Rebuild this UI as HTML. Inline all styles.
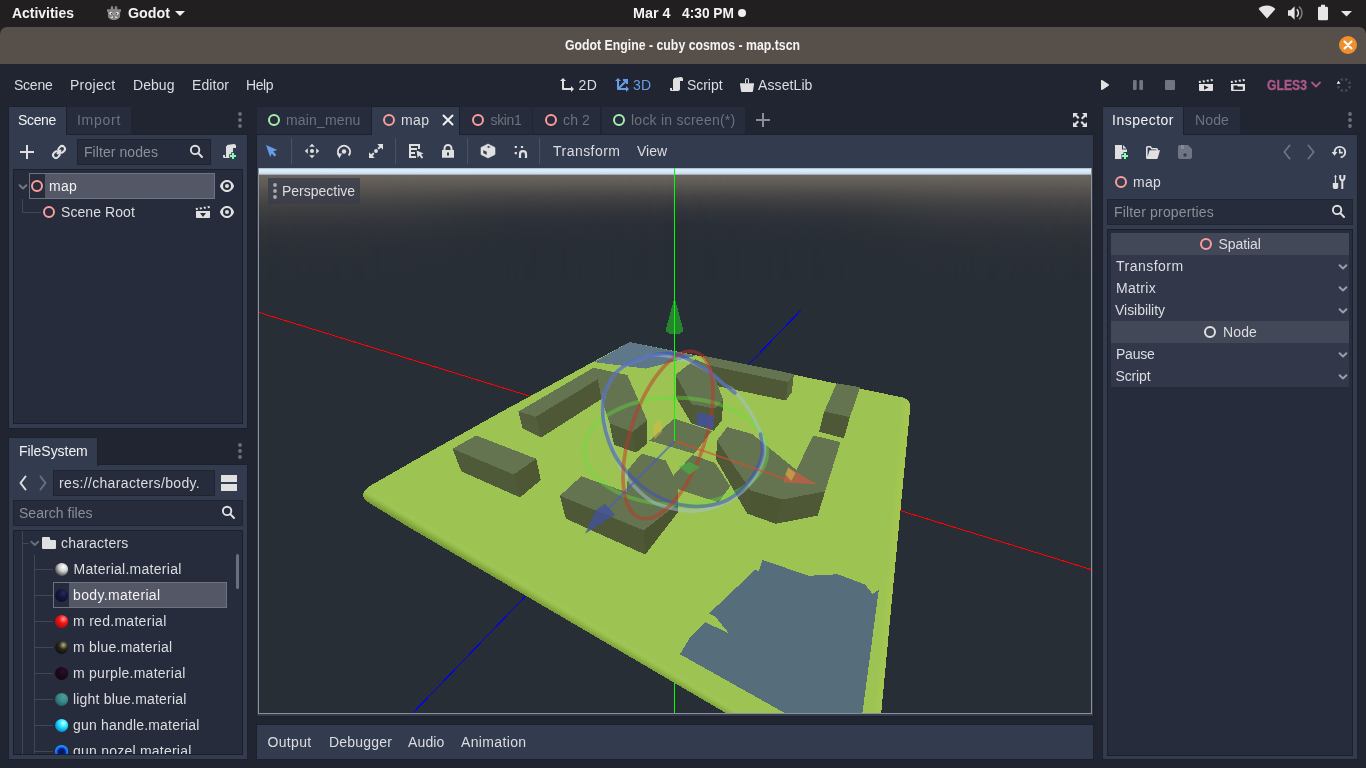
<!DOCTYPE html>
<html lang="en">
<head>
<meta charset="utf-8">
<title>Godot Engine - cuby cosmos - map.tscn</title>
<style>
html,body{margin:0;padding:0;}
body{width:1366px;height:768px;overflow:hidden;background:#202531;position:relative;
  font-family:"Liberation Sans","DejaVu Sans",sans-serif;font-size:14px;color:#dcdde1;}
.a{position:absolute;}
.t{position:absolute;white-space:nowrap;line-height:20px;height:20px;z-index:2;}
.b{font-weight:bold;transform-origin:0 50%;color:#f4f4f4;}
.dim{color:#6d727e;}
.ph{color:#8b8f99;}
.hl{color:#f2f2f2;}
svg{position:absolute;overflow:visible;z-index:2;}
.tabsel{background:#333b4f;z-index:1;box-shadow:-1px 0 #1c212c,1px 0 #1c212c,0 -1px #1c212c;}
.tabun{background:#262c3b;}
.panel{background:#333b4f;box-shadow:0 0 0 1px #1c212c;}
.tree{background:#262c3b;border:1px solid #1c202b;box-sizing:border-box;}
.field{background:#262c3b;border:1px solid #20242f;box-sizing:border-box;}
.sec{background:#424858;}
.row{background:#32384a;}
.sel{background:#545866;border:1px solid #6f7380;box-sizing:border-box;}
.ln{background:#414757;}
.sep{background:#4a5163;width:1px;}
</style>
</head>
<body>
<div id="root" style="position:absolute;left:0;top:0;width:1366px;height:768px;will-change:transform;">
<div class="a " style="left:0px;top:0px;width:1366px;height:27px;background:#211f1f;"></div>
<div class="t b" style="left:12px;top:3px;font-size:15px;transform:scaleX(0.929);">Activities</div>
<div class="t b" style="left:128px;top:3px;font-size:15px;transform:scaleX(0.951);">Godot</div>
<div class="t b" style="left:632.5px;top:3px;font-size:15px;transform:scaleX(0.957);">Mar 4</div>
<div class="t b" style="left:681.5px;top:3px;font-size:15px;transform:scaleX(0.917);">4:30 PM</div>
<div class="a " style="left:738px;top:9px;width:8px;height:8px;background:#f0f0f0;border-radius:50%;"></div>
<div class="a " style="left:0px;top:27px;width:1366px;height:10px;background:#211f1f;"></div>
<div class="a " style="left:0px;top:27px;width:1366px;height:37px;background:#574f4a;border-radius:7px 7px 0 0;"></div>
<div class="t b" style="left:565px;top:35px;font-size:14.5px;transform:scaleX(0.848);">Godot Engine - cuby cosmos - map.tscn</div>
<div class="a " style="left:1339px;top:36px;width:18px;height:18px;background:#ef8f2d;border-radius:50%;"></div>
<div class="t" style="left:14px;top:75px;letter-spacing:-0.24px;">Scene</div>
<div class="t" style="left:70px;top:75px;letter-spacing:0.27px;">Project</div>
<div class="t" style="left:133px;top:75px;letter-spacing:0.05px;">Debug</div>
<div class="t" style="left:192px;top:75px;letter-spacing:0.07px;">Editor</div>
<div class="t" style="left:246px;top:75px;letter-spacing:-0.45px;">Help</div>
<div class="t" style="left:578.5px;top:75px;letter-spacing:0.55px;">2D</div>
<div class="t" style="left:633px;top:75px;letter-spacing:0.30px;color:#699ce8;">3D</div>
<div class="t" style="left:687px;top:75px;letter-spacing:-0.05px;">Script</div>
<div class="t" style="left:758px;top:75px;letter-spacing:0.10px;">AssetLib</div>
<div class="t b" style="left:1267px;top:75px;font-size:14px;transform:scaleX(0.871);color:#ad5689;-webkit-text-stroke:.35px #ad5689;">GLES3</div>
<div class="a tabsel" style="left:9px;top:107px;width:57px;height:28px;"></div>
<div class="a tabun" style="left:67px;top:107px;width:64px;height:27px;"></div>
<div class="a panel" style="left:9px;top:135px;width:238px;height:293px;"></div>
<div class="t hl" style="left:18px;top:110px;letter-spacing:-0.34px;">Scene</div>
<div class="t dim" style="left:77px;top:110px;letter-spacing:0.72px;">Import</div>
<div class="a field" style="left:77px;top:139px;width:134px;height:26px;"></div>
<div class="t ph" style="left:84px;top:142px;letter-spacing:0.07px;">Filter nodes</div>
<div class="a tree" style="left:13px;top:169px;width:230px;height:255px;"></div>
<div class="a sel" style="left:29px;top:173px;width:186px;height:26px;"></div>
<div class="a " style="left:30px;top:174px;width:15px;height:24px;background:#262c3b;"></div>
<div class="t hl" style="left:49px;top:176px;letter-spacing:0.26px;">map</div>
<div class="t" style="left:61px;top:202px;letter-spacing:0.08px;">Scene Root</div>
<div class="a ln" style="left:22px;top:199px;width:1px;height:14px;"></div>
<div class="a ln" style="left:22px;top:212px;width:19px;height:1px;"></div>
<div class="a tabsel" style="left:9px;top:438px;width:88px;height:28px;"></div>
<div class="a panel" style="left:9px;top:465px;width:238px;height:294px;"></div>
<div class="t hl" style="left:19px;top:441px;letter-spacing:-0.05px;">FileSystem</div>
<div class="a field" style="left:53px;top:470px;width:162px;height:26px;"></div>
<div class="t" style="left:59px;top:473px;letter-spacing:0.34px;">res://characters/body.</div>
<div class="a field" style="left:13px;top:500px;width:230px;height:26px;"></div>
<div class="t ph" style="left:19px;top:503px;letter-spacing:0.03px;">Search files</div>
<div class="a tree" style="left:13px;top:530px;width:230px;height:225px;overflow:hidden;">
<div class="a ln" style="left:8px;top:0px;width:1px;height:230px;"></div>
<div class="a ln" style="left:9px;top:12px;width:6px;height:1px;"></div>
<div class="a ln" style="left:20px;top:24px;width:1px;height:210px;"></div>
<div class="a ln" style="left:21px;top:38px;width:18px;height:1px;"></div>
<div class="a ln" style="left:21px;top:64px;width:18px;height:1px;"></div>
<div class="a ln" style="left:21px;top:90px;width:18px;height:1px;"></div>
<div class="a ln" style="left:21px;top:116px;width:18px;height:1px;"></div>
<div class="a ln" style="left:21px;top:142px;width:18px;height:1px;"></div>
<div class="a ln" style="left:21px;top:168px;width:18px;height:1px;"></div>
<div class="a ln" style="left:21px;top:194px;width:18px;height:1px;"></div>
<div class="a ln" style="left:21px;top:220px;width:18px;height:1px;"></div>
<div class="a sel" style="left:39px;top:51px;width:174px;height:26px;"></div>
<div class="a " style="left:40px;top:52px;width:15px;height:24px;background:#262c3b;"></div>
<div class="t" style="left:47px;top:2px;letter-spacing:0.21px;">characters</div>
<div class="t" style="left:59.5px;top:28px;letter-spacing:0.27px;">Material.material</div>
<div class="t hl" style="left:59px;top:54px;letter-spacing:0.34px;">body.material</div>
<div class="t" style="left:59px;top:80px;letter-spacing:0.29px;">m red.material</div>
<div class="t" style="left:59px;top:106px;letter-spacing:0.25px;">m blue.material</div>
<div class="t" style="left:59px;top:132px;letter-spacing:0.26px;">m purple.material</div>
<div class="t" style="left:59px;top:158px;letter-spacing:0.20px;">light blue.material</div>
<div class="t" style="left:59px;top:184px;letter-spacing:0.19px;">gun handle.material</div>
<div class="t" style="left:59px;top:210px;letter-spacing:0.23px;">gun nozel.material</div>
<div class="a " style="left:222px;top:23px;width:3px;height:35px;background:#6b6f7b;border-radius:2px;"></div>
<svg style="left:0;top:0;" width="228" height="223" viewBox="14 531 228 223"><defs><radialGradient id="sg0" cx=".64" cy=".32" r=".75"><stop offset="0" stop-color="#ffffff"/><stop offset=".45" stop-color="#cfcfcf"/><stop offset="1" stop-color="#3a3a3a"/></radialGradient><radialGradient id="sg1" cx=".64" cy=".32" r=".75"><stop offset="0" stop-color="#2a2a58"/><stop offset=".45" stop-color="#16163e"/><stop offset="1" stop-color="#0d0d28"/></radialGradient><radialGradient id="sg2" cx=".64" cy=".32" r=".75"><stop offset="0" stop-color="#ff9a9a"/><stop offset=".45" stop-color="#f01414"/><stop offset="1" stop-color="#b00808"/></radialGradient><radialGradient id="sg3" cx=".64" cy=".32" r=".75"><stop offset="0" stop-color="#b8b080"/><stop offset=".45" stop-color="#2a281c"/><stop offset="1" stop-color="#0c0c08"/></radialGradient><radialGradient id="sg4" cx=".64" cy=".32" r=".75"><stop offset="0" stop-color="#2a1028"/><stop offset=".45" stop-color="#1c0a1c"/><stop offset="1" stop-color="#120612"/></radialGradient><radialGradient id="sg5" cx=".64" cy=".32" r=".75"><stop offset="0" stop-color="#4a9c9c"/><stop offset=".45" stop-color="#3b8c8c"/><stop offset="1" stop-color="#245e62"/></radialGradient><radialGradient id="sg6" cx=".64" cy=".32" r=".75"><stop offset="0" stop-color="#c8ffff"/><stop offset=".45" stop-color="#1ee6ff"/><stop offset="1" stop-color="#0a78c8"/></radialGradient><radialGradient id="sg7" cx=".5" cy=".55" r=".5"><stop offset="0" stop-color="#081458"/><stop offset=".55" stop-color="#0a1c78"/><stop offset=".72" stop-color="#0a60ff"/><stop offset="1" stop-color="#18a0ff"/></radialGradient></defs><circle cx="61.600" cy="569.4" r="6.500" fill="url(#sg0)"/><circle cx="61.600" cy="595.4" r="6.500" fill="url(#sg1)"/><circle cx="61.600" cy="621.4" r="6.500" fill="url(#sg2)"/><circle cx="61.600" cy="647.4" r="6.500" fill="url(#sg3)"/><circle cx="61.600" cy="673.4" r="6.500" fill="url(#sg4)"/><circle cx="61.600" cy="699.4" r="6.500" fill="url(#sg5)"/><circle cx="61.600" cy="725.4" r="6.500" fill="url(#sg6)"/><circle cx="61.600" cy="751.400" r="6.500" fill="url(#sg7)"/><path transform="translate(41 535)" d="m2 2a1 1 0 0 0-1 1v2 6 2a1 1 0 0 0 1 1h12a1 1 0 0 0 1-1v-7a1 1 0 0 0-1-1h-4a1 1 0 0 1-1-1v-1a1 1 0 0 0-1-1z" fill="#e0e0e0"/><path d="M31.400 541.700 34.800 545 38.200 541.700" stroke="#676c7b" stroke-width="2" fill="none" stroke-linecap="round" stroke-linejoin="round"/></svg>
</div>
<div class="a tabun" style="left:257px;top:107px;width:114px;height:27px;"></div>
<div class="a tabsel" style="left:372px;top:107px;width:87px;height:28px;"></div>
<div class="a tabun" style="left:460px;top:107px;width:72px;height:27px;"></div>
<div class="a tabun" style="left:533px;top:107px;width:67px;height:27px;"></div>
<div class="a tabun" style="left:602px;top:107px;width:143px;height:27px;"></div>
<div class="t dim" style="left:286px;top:110px;letter-spacing:0.15px;">main_menu</div>
<div class="t" style="left:401px;top:110px;letter-spacing:0.42px;">map</div>
<div class="t dim" style="left:490.5px;top:110px;letter-spacing:-0.34px;">skin1</div>
<div class="t dim" style="left:563px;top:110px;letter-spacing:0.13px;">ch 2</div>
<div class="t dim" style="left:631px;top:110px;letter-spacing:0.24px;">lock in screen(*)</div>
<div class="a panel" style="left:257px;top:135px;width:836px;height:581px;"></div>
<div class="a sep" style="left:291px;top:138px;width:1px;height:26px;"></div>
<div class="a sep" style="left:395px;top:138px;width:1px;height:26px;"></div>
<div class="a sep" style="left:467px;top:138px;width:1px;height:26px;"></div>
<div class="a sep" style="left:539px;top:138px;width:1px;height:26px;"></div>
<div class="t" style="left:553px;top:141px;letter-spacing:0.47px;">Transform</div>
<div class="t" style="left:637px;top:141px;letter-spacing:-0.02px;">View</div>
<div id="viewport" class="a" style="left:258px;top:168px;width:834px;height:546px;background:#282e36;overflow:hidden;z-index:0;">
<svg style="left:-258px;top:-168px;" width="1366" height="768" viewBox="0 0 1366 768">
<defs>
<linearGradient id="skyC" x1="0" y1="0" x2="0" y2="1"><stop offset="0.0000" stop-color="#8c93a3"/><stop offset="0.0089" stop-color="#dcedfc"/><stop offset="0.0312" stop-color="#d8eafa"/><stop offset="0.0491" stop-color="#c9dcec"/><stop offset="0.0580" stop-color="#a4adb6"/><stop offset="0.0670" stop-color="#6a645e"/><stop offset="0.0893" stop-color="#68625c"/><stop offset="0.1161" stop-color="#635e59"/><stop offset="0.1429" stop-color="#5d5955"/><stop offset="0.1786" stop-color="#555250"/><stop offset="0.2143" stop-color="#4e4c4b"/><stop offset="0.2500" stop-color="#464546"/><stop offset="0.2857" stop-color="#404042"/><stop offset="0.3214" stop-color="#3a3c3f"/><stop offset="0.3571" stop-color="#35383c"/><stop offset="0.4018" stop-color="#31343a"/><stop offset="0.4464" stop-color="#2e3239"/><stop offset="0.4911" stop-color="#2b3038"/><stop offset="0.5357" stop-color="#2a2f37"/><stop offset="0.5893" stop-color="#292f36"/><stop offset="0.6429" stop-color="#292e36"/><stop offset="0.7143" stop-color="#282e36"/><stop offset="0.8036" stop-color="#282e36"/><stop offset="0.8929" stop-color="#282e36"/><stop offset="1.0000" stop-color="#282e36"/></linearGradient><linearGradient id="skyE" x1="0" y1="0" x2="0" y2="1"><stop offset="0.0000" stop-color="#8c93a3"/><stop offset="0.0089" stop-color="#dcedfc"/><stop offset="0.0312" stop-color="#d8eafa"/><stop offset="0.0491" stop-color="#c9dcec"/><stop offset="0.0580" stop-color="#a4adb6"/><stop offset="0.0670" stop-color="#6a645e"/><stop offset="0.0893" stop-color="#67625c"/><stop offset="0.1161" stop-color="#635e59"/><stop offset="0.1429" stop-color="#5f5b56"/><stop offset="0.1786" stop-color="#595552"/><stop offset="0.2143" stop-color="#54514f"/><stop offset="0.2500" stop-color="#4e4c4b"/><stop offset="0.2857" stop-color="#494848"/><stop offset="0.3214" stop-color="#444445"/><stop offset="0.3571" stop-color="#404043"/><stop offset="0.4018" stop-color="#3b3d40"/><stop offset="0.4464" stop-color="#37393e"/><stop offset="0.4911" stop-color="#34373c"/><stop offset="0.5357" stop-color="#31353a"/><stop offset="0.5893" stop-color="#2f3339"/><stop offset="0.6429" stop-color="#2d3138"/><stop offset="0.7143" stop-color="#2b3037"/><stop offset="0.8036" stop-color="#2a2f37"/><stop offset="0.8929" stop-color="#292f36"/><stop offset="1.0000" stop-color="#282e36"/></linearGradient><linearGradient id="skyW" x1="0" y1="0" x2="1" y2="0"><stop offset="0.0000" stop-color="#fff" stop-opacity="1.000"/><stop offset="0.0444" stop-color="#fff" stop-opacity="0.969"/><stop offset="0.0923" stop-color="#fff" stop-opacity="0.901"/><stop offset="0.1463" stop-color="#fff" stop-opacity="0.857"/><stop offset="0.1882" stop-color="#fff" stop-opacity="0.746"/><stop offset="0.2302" stop-color="#fff" stop-opacity="0.500"/><stop offset="0.2722" stop-color="#fff" stop-opacity="0.254"/><stop offset="0.3141" stop-color="#fff" stop-opacity="0.143"/><stop offset="0.3681" stop-color="#fff" stop-opacity="0.114"/><stop offset="0.4281" stop-color="#fff" stop-opacity="0.048"/><stop offset="0.5000" stop-color="#fff" stop-opacity="0.000"/><stop offset="0.5719" stop-color="#fff" stop-opacity="0.048"/><stop offset="0.6319" stop-color="#fff" stop-opacity="0.114"/><stop offset="0.6859" stop-color="#fff" stop-opacity="0.143"/><stop offset="0.7278" stop-color="#fff" stop-opacity="0.254"/><stop offset="0.7698" stop-color="#fff" stop-opacity="0.500"/><stop offset="0.8118" stop-color="#fff" stop-opacity="0.746"/><stop offset="0.8537" stop-color="#fff" stop-opacity="0.857"/><stop offset="0.9077" stop-color="#fff" stop-opacity="0.901"/><stop offset="0.9556" stop-color="#fff" stop-opacity="0.969"/><stop offset="1.0000" stop-color="#fff" stop-opacity="1.000"/></linearGradient><mask id="skyM" maskUnits="userSpaceOnUse" x="258" y="168" width="834" height="112"><rect x="258" y="168" width="834" height="112" fill="url(#skyW)"/></mask>
<linearGradient id="edgeL" gradientUnits="userSpaceOnUse" x1="505.600" y1="571" x2="500" y2="580.400"><stop offset="0" stop-color="#9dc353"/><stop offset=".2" stop-color="#a0c655"/><stop offset=".45" stop-color="#98be4e"/><stop offset=".7" stop-color="#8aae43"/><stop offset="1" stop-color="#779a36"/></linearGradient>
<linearGradient id="edgeR" gradientUnits="userSpaceOnUse" x1="887" y1="560" x2="896" y2="560.800"><stop offset="0" stop-color="#9dc353"/><stop offset=".5" stop-color="#a2c651"/><stop offset="1" stop-color="#a6c74d"/></linearGradient>
</defs>
<rect x="258" y="168" width="834" height="112" fill="url(#skyC)"/><rect x="258" y="168" width="834" height="112" fill="url(#skyE)" mask="url(#skyM)"/>
<!-- world axes (behind plane) -->
<path d="M258 312.200 1092 569.800" stroke="#f00" stroke-width="1" shape-rendering="crispEdges"/>
<path d="M800.900 310.300 411.900 714" stroke="#0000f0" stroke-width="1" shape-rendering="crispEdges"/>
<path d="M674.500 168V714" stroke="#0f0" stroke-width="1" shape-rendering="crispEdges"/>
<!-- plane -->
<g shape-rendering="crispEdges">
<path d="M627 343.400Q629.500 341.600 633 342.700L794 374.700 903 397.600Q911 400 910.200 408L881.100 714H727.500L580 627.500 410.200 528 368.600 502.500Q361 497.500 364 491.500 366 488 371.300 485.200L415.100 460 500 412.600Z" fill="#9dc353"/>
<path d="M727.500 714 580 627.500 410.200 528 368.600 502.500Q361 497.500 364 491.500L376 495 420 520 590 620 750 714Z" fill="url(#edgeL)"/>
<path d="M898 400 903 397.600Q911 400 910.200 408L881.100 714H869Z" fill="url(#edgeR)"/>
</g>
<!-- blue-grey patches -->
<path shape-rendering="crispEdges" d="M629.500 342 594.200 362.200 645.700 368.600 696 355.700Z" fill="#5e7889"/>
<path shape-rendering="crispEdges" d="M762.500 560 808.750 575.750 837.500 574.250 865 584.500 872.500 593.750 878.750 590 862.300 714H786.500L680 654.250 690 637.500 705 622 728.750 633.250 715 616.250 708.750 613.750 755 570 758.750 571.250Z" fill="#566e7c"/>
<g shape-rendering="crispEdges">
<!-- building G -->
<path d="M452.500 448.750 476.250 435.500 536.250 458.750 513.750 474.500Z" fill="#647450"/>
<path d="M452.500 448.750 513.750 474.500 520 497.500 461.400 471.400Z" fill="#4f5a38"/>
<path d="M513.750 474.500 536.250 458.750 540.750 480 520 497.500Z" fill="#4d5734"/>
<!-- building A (L) -->
<path d="M518.400 411.500 593.500 367.700 627.300 375 647.200 420.400 632 432 609.600 423.300 601.500 399 597.900 379.200 536 416.700Z" fill="#647450"/>
<path d="M518.400 411.500 536 416.700 541.250 437.500 522.500 428Z" fill="#535e3e"/>
<path d="M536 416.700 597.900 379.200 601.500 399 541.250 437.500Z" fill="#4e5836"/>
<path d="M609.600 423.300 632 432 636 452.600 614 444.800Z" fill="#4f5a38"/>
<path d="M632 432 647.200 420.400 647.400 443.500 636 452.600Z" fill="#4c5633"/>
<!-- building B (bar top right) -->
<path d="M702.700 355.600 793.900 374 788 382 710 365.600Z" fill="#647450"/>
<path d="M710 365.600 788 382 785.800 400.500 712.200 385Z" fill="#4e5836"/>
<path d="M793.900 374 788 382 785.800 400.500 791.700 392.400Z" fill="#59643f"/>
<!-- building C -->
<path d="M675.500 374.700 695.300 359.300 710 365.600 723.300 399.800 715.200 408.600 691.600 404.200Z" fill="#647450"/>
<path d="M675.500 374.700 691.600 404.200 691.600 423.300 675.500 396.800Z" fill="#4e5836"/>
<path d="M691.600 404.200 715.200 408.600 713.700 430.700 691.600 423.300Z" fill="#4f5a38"/>
<path d="M715.200 408.600 723.300 399.800 721.800 420.400 713.700 430.700Z" fill="#4c5633"/>
<!-- building D -->
<path d="M836.700 383.300 860.200 387.200 849.900 417.100 824.200 411.500Z" fill="#647450"/>
<path d="M824.200 411.500 849.900 417.100 844 438.300 819 431.700Z" fill="#4e5836"/>
<!-- building I (centre pad) -->
<path d="M649.300 440.600 674 418.700 712 431 694.200 453.800Z" fill="#647450"/>
<!-- building E (V) -->
<path d="M716.900 440.600 727.200 427.100 752.200 434 796.400 470 813.300 435.500 840.500 442.100 825.100 491.400 782.400 499.500 750.800 490.600Z" fill="#647450"/>
<path d="M716.900 440.600 750.800 490.600 747.100 513.500 716.200 459.700Z" fill="#4e5836"/>
<path d="M750.800 490.600 782.400 499.500 775.800 523.800 747.100 513.500Z" fill="#4c5633"/>
<path d="M782.400 499.500 825.100 491.400 817.700 515.700 775.800 523.800Z" fill="#4e5836"/>
<!-- building H+J+K -->
<path d="M559.900 495.800 581.200 476.300 626.800 492.100 628.300 469.300 641.500 453.500 665.800 460.500 673.200 475.900 692.300 455 714.800 462.700 730.200 486.200 718.500 502.400 677.600 489.200 677.600 504 643.800 530.400Z" fill="#647450"/>
<path d="M559.900 495.800 643.800 530.400 645.200 554.600 565.800 518.600Z" fill="#4e5836"/>
<path d="M643.800 530.400 677.600 504 677.600 512.700 645.200 554.600Z" fill="#4a5431"/>
</g>
<!-- gizmo -->
<g fill="none" stroke-width="3.600">
<ellipse cx="675.600" cy="451.200" rx="91.600" ry="53.500" transform="rotate(.6 675.600 451.200)" stroke="rgba(100,225,60,.4)" stroke-width="4"/>
<path d="M602.9 411.6C602.0 405.7 602.7 405.6 603.2 402.0C603.7 398.4 603.2 395.4 605.8 390.1C608.4 384.8 611.7 375.7 618.6 370.1C625.5 364.5 639.6 358.9 647.3 356.5C655.0 354.1 660.2 355.1 665.0 355.5C669.8 355.9 671.8 357.6 676.0 358.6C680.2 359.6 684.7 359.4 690.0 361.5C695.3 363.6 702.0 366.9 708.0 371.0C714.0 375.1 721.8 382.6 726.0 385.8C730.2 389.0 729.6 386.5 733.2 390.1C736.8 393.7 743.2 400.9 747.5 407.3C751.8 413.8 756.1 421.7 759.0 428.8C761.9 435.9 764.9 442.8 764.7 450.0C764.5 457.2 761.8 465.0 758.0 472.0C754.2 479.0 748.3 486.5 742.0 492.0C735.7 497.5 727.5 501.8 720.0 505.0C712.5 508.2 704.5 510.3 697.0 511.0C689.5 511.7 682.3 510.5 675.0 509.0C667.7 507.5 660.0 506.0 653.0 502.0C646.0 498.0 638.5 491.0 633.0 485.0C627.5 479.0 623.2 471.8 620.0 466.0C616.8 460.2 615.5 454.8 613.6 450.0C611.7 445.2 610.4 443.8 608.6 437.4C606.8 431.0 603.8 417.5 602.9 411.6Z" stroke="rgba(160,195,215,.5)"/>
<path d="M760.5 434.0C760.8 437.5 763.8 447.3 762.0 455.0C760.2 462.7 755.6 472.6 750.0 480.0C744.4 487.4 736.1 495.1 728.6 499.4C721.1 503.7 713.3 505.1 705.0 506.0C696.7 506.9 687.3 506.4 679.0 504.6C670.7 502.8 662.2 498.9 655.0 495.0C647.8 491.1 642.0 486.5 636.0 481.0C630.0 475.5 623.5 468.5 619.0 462.0C614.5 455.5 611.6 448.8 609.0 442.0C606.4 435.2 604.5 427.3 603.5 421.0C602.5 414.7 602.5 409.5 602.9 404.4C603.3 399.2 603.2 395.8 605.8 390.1C608.4 384.4 611.7 375.7 618.6 370.1C625.5 364.5 637.8 359.1 647.3 356.5C656.8 353.9 666.4 352.3 675.9 354.3C685.4 356.3 696.1 363.4 704.5 368.6C712.9 373.9 720.9 381.7 726.0 385.8C731.1 389.9 733.5 391.8 735.0 393.0" stroke="rgba(62,80,190,.55)" stroke-linecap="round"/>
<ellipse cx="668" cy="435" rx="37.200" ry="87.400" transform="rotate(18.600 668 435)" stroke="rgba(196,52,40,.5)"/>
</g>
<path d="M674.700 441 788 480" stroke="rgba(215,75,50,.6)" stroke-width="2"/>
<path d="M674.700 441 606 511" stroke="rgba(70,90,200,.6)" stroke-width="2"/>
<path d="M674.500 297 683.500 331 680 333.500H669L665.500 331Z" fill="#26832e" shape-rendering="crispEdges"/>
<path d="M674.500 168V441" stroke="#0f0" stroke-width="1" shape-rendering="crispEdges"/>
<path d="M788.300 467.400 783.200 482.500 817 484.300Z" fill="rgba(190,95,70,.8)"/>
<path d="M788.300 467.400 795.600 473 791.200 481 785.300 474.500Z" fill="rgba(205,190,70,.6)"/>
<path d="M585 533.750 596 510 605 503.750 615 515Z" fill="rgba(66,80,160,.75)"/>
<path d="M653 425 661 418.700 662 431.700 654.400 439.600Z" fill="rgba(215,185,65,.55)"/>
<path d="M679 467 689.500 461.700 700 467 689.500 474.700Z" fill="rgba(70,175,65,.7)"/>
<path d="M697.400 412.200 714.300 416.100 713 429.100 696.800 425.200Z" fill="rgba(66,80,170,.75)"/>
</svg>
</div>
<div class="a " style="left:258px;top:168px;width:834px;height:546px;border:1px solid #8d9099;box-sizing:border-box;border-top:none;"></div>
<div class="a " style="left:268px;top:178px;width:92px;height:26px;background:rgba(56,60,74,.75);"></div>
<div class="t" style="left:282px;top:180.5px;letter-spacing:-0.01px;">Perspective</div>
<div class="a panel" style="left:257px;top:725px;width:836px;height:34px;"></div>
<div class="t" style="left:267.5px;top:732px;letter-spacing:0.33px;">Output</div>
<div class="t" style="left:329px;top:732px;letter-spacing:0.19px;">Debugger</div>
<div class="t" style="left:408px;top:732px;letter-spacing:0.14px;">Audio</div>
<div class="t" style="left:461px;top:732px;letter-spacing:0.36px;">Animation</div>
<div class="a tabsel" style="left:1103px;top:107px;width:80px;height:28px;"></div>
<div class="a tabun" style="left:1184px;top:107px;width:56px;height:27px;"></div>
<div class="a panel" style="left:1103px;top:135px;width:254px;height:624px;"></div>
<div class="t hl" style="left:1112px;top:110px;letter-spacing:0.49px;">Inspector</div>
<div class="t dim" style="left:1195px;top:110px;letter-spacing:0.13px;">Node</div>
<div class="t" style="left:1133px;top:172px;letter-spacing:0.26px;">map</div>
<div class="a field" style="left:1107px;top:199px;width:246px;height:26px;"></div>
<div class="t ph" style="left:1114px;top:202px;letter-spacing:0.16px;">Filter properties</div>
<div class="a tree" style="left:1107px;top:229px;width:246px;height:527px;"></div>
<div class="a sec" style="left:1111px;top:233px;width:238px;height:22px;"></div>
<div class="a row" style="left:1111px;top:255px;width:238px;height:66px;"></div>
<div class="a sec" style="left:1111px;top:321px;width:238px;height:22px;"></div>
<div class="a row" style="left:1111px;top:343px;width:238px;height:44px;"></div>
<div class="t" style="left:1218.5px;top:234px;letter-spacing:-0.09px;">Spatial</div>
<div class="t" style="left:1116px;top:256px;letter-spacing:0.48px;">Transform</div>
<div class="t" style="left:1116px;top:278px;letter-spacing:0.31px;">Matrix</div>
<div class="t" style="left:1115px;top:300px;letter-spacing:-0.03px;">Visibility</div>
<div class="t" style="left:1223px;top:322px;letter-spacing:0.13px;">Node</div>
<div class="t" style="left:1116px;top:344px;letter-spacing:-0.24px;">Pause</div>
<div class="t" style="left:1115.5px;top:366px;letter-spacing:-0.13px;">Script</div>
<svg style="left:106px;top:5px;" width="16" height="16" viewBox="0 0 16 16">
<path d="M5 1.200h2l.3 2.800h1.400L9 1.200h2l.4 3H15v2.400l-.9.700v3.400c0 2.300-2.400 4.300-6.100 4.300s-6.100-2-6.100-4.300V7.300L1 6.600V4.200h3.600z" fill="#858585"/>
<circle cx="4.900" cy="8.300" r="1.400" fill="#fff"/><circle cx="11.100" cy="8.300" r="1.400" fill="#fff"/>
<circle cx="5.500" cy="8.600" r=".8" fill="#3c3c3c"/><circle cx="10.500" cy="8.600" r=".8" fill="#3c3c3c"/>
<ellipse cx="8" cy="9" rx="1.200" ry=".9" fill="#9c9c9c"/>
<path d="M3.800 12.800 7 11.200v1.600zM12.200 12.800 9 11.200v1.600z" fill="#f4f4f4"/><rect x="7.500" y="12" width="1" height="1" fill="#6a6a6a"/>
</svg>
<svg style="left:175px;top:11px;" width="10" height="5" viewBox="0 0 10 5"><path d="M0 0h10l-5 5z" fill="#f0f0f0"/></svg>
<svg style="left:1258px;top:5px;" width="18" height="14" viewBox="0 0 18 14"><path d="M9 13.600 .6 3.900C2.800 1.700 5.800 .6 9 .6s6.200 1.100 8.400 3.300z" fill="#e6e6e6"/></svg>
<svg style="left:1287px;top:5px;" width="17" height="16" viewBox="0 0 17 16"><path d="M1 5.200h2.600l4-3.900v13.400l-4-3.900h-2.600z" fill="#e6e6e6"/><path d="M9.800 4.300a5 5 0 0 1 0 7.400" stroke="#e6e6e6" stroke-width="1.500" fill="none"/><path d="M12 1.700a8.200 8.200 0 0 1 0 12.600" stroke="#7a7878" stroke-width="1.500" fill="none"/></svg>
<svg style="left:1317px;top:4px;" width="12" height="17" viewBox="0 0 12 17"><path d="M4 .8h4v2h1.800a1.200 1.200 0 0 1 1.200 1.200v11a1.200 1.200 0 0 1-1.200 1.200h-7.600a1.200 1.200 0 0 1-1.200-1.200v-11a1.200 1.200 0 0 1 1.200-1.200h1.800z" fill="#e6e6e6"/></svg>
<svg style="left:1341px;top:11px;" width="11" height="6" viewBox="0 0 11 6"><path d="M0 0h11l-5.500 5.500z" fill="#e6e6e6"/></svg>
<svg style="left:1343px;top:40px;" width="10" height="10" viewBox="0 0 10 10"><path d="M1.500 1.500 8.500 8.500M8.500 1.500 1.500 8.500" stroke="#fff" stroke-width="2" stroke-linecap="round"/></svg>
<svg style="left:559px;top:77px;" width="16" height="16" viewBox="0 0 16 16" ><path d="m4 1-3 3h2v8c0 .55228.44772 1 1 1h8v2l3-3-3-3v2h-7v-7h2z" fill="#e0e0e0" /></svg>
<svg style="left:614px;top:77px;" width="16" height="16" viewBox="0 0 16 16" ><path d="m4 1-3 3h2v8c0 .55228.44772 1 1 1h8v2l3-3-3-3v2h-5.5859l5.5859-5.5859v1.5859h2v-5h-5v2h1.5859l-5.5859 5.5859v-5.5859h2z" fill="#699ce8" /></svg>
<svg style="left:667.5px;top:77px;" width="16" height="16" viewBox="0 0 16 16" ><path d="m6 1v1c-.55228 0-1 .44772-1 1v10h-1v-2h-2v2c.0002826.3568.19057.68638.49961.86477.15451.08919.32745.13421.50039.13421v.0010195h7c1.1046 0 2-.89543 2-2v-8h3v-2c0-1.1046-.89543-2-2-2z" fill="#e0e0e0" /></svg>
<svg style="left:739px;top:77px;" width="16" height="16" viewBox="0 0 16 16" ><path d="M1 6.2h14v1l-1 6.8a1 1 0 0 1-1 1h-10a1 1 0 0 1-1-1l-1-6.8z" fill="#e0e0e0" /><path d="M6 6.2v-3.2a2 2 0 0 1 4 0v3.2h-1.1v-3.2a.9.9 0 0 0-1.8 0v3.2z" fill="#e0e0e0" /></svg>
<svg style="left:1097px;top:77px;" width="16" height="16" viewBox="0 0 16 16" ><path d="m4 12a1 1 0 0 0 1.555.832l6-4a1 1 0 0 0 0-1.664l-6-4a1 1 0 0 0-1.555.832z" fill="#e0e0e0" /></svg>
<svg style="left:1130px;top:77px;" width="16" height="16" viewBox="0 0 16 16" ><rect x="3" y="3" width="3.700" height="10" rx="1" fill="#717582"/><rect x="9.300" y="3" width="3.700" height="10" rx="1" fill="#717582"/></svg>
<svg style="left:1162px;top:77px;" width="16" height="16" viewBox="0 0 16 16" ><rect x="3" y="3" width="10" height="10" rx="1" fill="#717582"/></svg>
<svg style="left:1198px;top:77px;" width="16" height="16" viewBox="0 0 16 16" ><path d="m14.564 2-2.2441.32812.81836 1.9004 1.7148-.25-.28906-1.9785zm-4.2227.61523-1.9785.28906.81836 1.9004 1.9785-.28906-.81836-1.9004zm-3.957.57812-1.9785.28906.81836 1.9023 1.9785-.28906-.81836-1.9023zm-3.9551.57812-1.7148.25.28906 1.9785 2.2441-.32812-.81836-1.9004z" fill="#e0e0e0" /><path d="M1 7v6c0 .55226.44772 1 1 1h12c.55228 0 1-.44774 1-1v-6zM6 8.300v4.400l4.600-2.200z" fill="#e0e0e0" fill-rule="evenodd"/></svg>
<svg style="left:1230px;top:77px;" width="16" height="16" viewBox="0 0 16 16" ><path d="m14.564 2-2.2441.32812.81836 1.9004 1.7148-.25-.28906-1.9785zm-4.2227.61523-1.9785.28906.81836 1.9004 1.9785-.28906-.81836-1.9004zm-3.957.57812-1.9785.28906.81836 1.9023 1.9785-.28906-.81836-1.9023zm-3.9551.57812-1.7148.25.28906 1.9785 2.2441-.32812-.81836-1.9004z" fill="#e0e0e0" /><path d="M1 7v6c0 .55226.44772 1 1 1h12c.55228 0 1-.44774 1-1v-6zM3.500 8.400v4.400h9.300v-3.400h-4.800l-.8-1z" fill="#e0e0e0" fill-rule="evenodd"/></svg>
<svg style="left:1311px;top:81px;" width="10" height="8" viewBox="0 0 10 8"><path d="M1 1.500 5 5.500 9 1.500" stroke="#ad5689" stroke-width="1.800" fill="none" stroke-linecap="round" stroke-linejoin="round"/></svg>
<svg style="left:1336px;top:77px;" width="16" height="16" viewBox="0 0 16 16" ><path d="M11.42 9.42 13.82 12.25 15.12 9.11z" fill="#474c5a"/><path d="M9.42 11.42 9.11 15.12 12.25 13.82z" fill="#474c5a"/><path d="M6.58 11.42 3.75 13.82 6.89 15.12z" fill="#474c5a"/><path d="M4.58 9.42 0.88 9.11 2.18 12.25z" fill="#474c5a"/><path d="M4.58 6.58 2.18 3.75 0.88 6.89z" fill="#f2f2f2"/><path d="M6.58 4.58 6.89 0.88 3.75 2.18z" fill="#474c5a"/><path d="M9.42 4.58 12.25 2.18 9.11 0.88z" fill="#474c5a"/><path d="M11.42 6.58 15.12 6.89 13.82 3.75z" fill="#474c5a"/></svg>
<svg style="left:238px;top:112px;" width="4" height="16" viewBox="0 0 4 16"><circle cx="2" cy="2" r="1.900" fill="#6c707b"/><circle cx="2" cy="8" r="1.900" fill="#6c707b"/><circle cx="2" cy="14" r="1.900" fill="#6c707b"/></svg>
<svg style="left:238px;top:443px;" width="4" height="16" viewBox="0 0 4 16"><circle cx="2" cy="2" r="1.900" fill="#6c707b"/><circle cx="2" cy="8" r="1.900" fill="#6c707b"/><circle cx="2" cy="14" r="1.900" fill="#6c707b"/></svg>
<svg style="left:1348px;top:112px;" width="4" height="16" viewBox="0 0 4 16"><circle cx="2" cy="2" r="1.900" fill="#6c707b"/><circle cx="2" cy="8" r="1.900" fill="#6c707b"/><circle cx="2" cy="14" r="1.900" fill="#6c707b"/></svg>
<svg style="left:19px;top:144px;" width="16" height="16" viewBox="0 0 16 16" ><path d="m7 1v6h-6v2h6v6h2v-6h6v-2h-6v-6z" fill="#e0e0e0" /></svg>
<svg style="left:51px;top:144px;" width="16" height="16" viewBox="0 0 16 16" ><g transform="rotate(-45 8 8)" fill="none" stroke="#e0e0e0" stroke-width="2"><rect x="8.400" y="5.100" width="6.800" height="5.800" rx="2.900"/><rect x=".8" y="5.100" width="6.800" height="5.800" rx="2.900"/><path d="M5.200 8h5.600"/></g></svg>
<svg style="left:188px;top:144px;" width="16" height="16" viewBox="0 0 16 16" ><circle cx="7.1" cy="5.9" r="4.2" fill="none" stroke="#e0e0e0" stroke-width="1.9"/><path d="M10.3 9.1 14 13" stroke="#e0e0e0" stroke-width="2" stroke-linecap="round"/></svg>
<svg style="left:221px;top:144px;" width="16" height="16" viewBox="0 0 16 16" ><path d="m6 1v1c-.55228 0-1 .44772-1 1v10h-1v-2h-2v2c.0002826.3568.19057.68638.49961.86477.15451.08919.32745.13421.50039.13421v.0010195h7c1.1046 0 2-.89543 2-2v-8h3v-2c0-1.1046-.89543-2-2-2z" fill="#e0e0e0" /><path d="m11 9v2h-2v2h2v2h2v-2h2v-2h-2v-2z" fill="#84ffb1" stroke="#333b4f" stroke-width="1.600" paint-order="stroke"/></svg>
<svg style="left:17px;top:180.5px;" width="12" height="12" viewBox="0 0 12 12"><path d="M2.600 4.300 6 7.500 9.400 4.300" stroke="#737887" stroke-width="2" fill="none" stroke-linecap="round" stroke-linejoin="round"/></svg>
<svg style="left:29px;top:178px;" width="16" height="16" viewBox="0 0 16 16" ><path d="m8 2a6 6 0 0 0-6 6 6 6 0 0 0 6 6 6 6 0 0 0 6-6 6 6 0 0 0-6-6zm0 2a4 4 0 0 1 4 4 4 4 0 0 1-4 4 4 4 0 0 1-4-4 4 4 0 0 1 4-4z" fill="#fc9c9c" /></svg>
<svg style="left:41px;top:204px;" width="16" height="16" viewBox="0 0 16 16" ><path d="m8 2a6 6 0 0 0-6 6 6 6 0 0 0 6 6 6 6 0 0 0 6-6 6 6 0 0 0-6-6zm0 2a4 4 0 0 1 4 4 4 4 0 0 1-4 4 4 4 0 0 1-4-4 4 4 0 0 1 4-4z" fill="#fc9c9c" /></svg>
<svg style="left:219px;top:178px;" width="16" height="16" viewBox="0 0 16 16" ><path d="m8 2c-2.5567 0-5.7907 1.9477-6.9551 5.7051a1.0001 1.0001 0 0 0-.0058594.57031c1.1244 3.9354 4.4609 5.7246 6.9609 5.7246s5.8365-1.7892 6.9609-5.7246a1.0001 1.0001 0 0 0 0-.55273c-1.1003-3.7876-4.4066-5.7227-6.9609-5.7227zm0 2a4 4 0 0 1 4 4 4 4 0 0 1-4 4 4 4 0 0 1-4-4 4 4 0 0 1 4-4zm0 2a2 2 0 0 0-2 2 2 2 0 0 0 2 2 2 2 0 0 0 2-2 2 2 0 0 0-2-2z" fill="#e0e0e0" /></svg>
<svg style="left:219px;top:204px;" width="16" height="16" viewBox="0 0 16 16" ><path d="m8 2c-2.5567 0-5.7907 1.9477-6.9551 5.7051a1.0001 1.0001 0 0 0-.0058594.57031c1.1244 3.9354 4.4609 5.7246 6.9609 5.7246s5.8365-1.7892 6.9609-5.7246a1.0001 1.0001 0 0 0 0-.55273c-1.1003-3.7876-4.4066-5.7227-6.9609-5.7227zm0 2a4 4 0 0 1 4 4 4 4 0 0 1-4 4 4 4 0 0 1-4-4 4 4 0 0 1 4-4zm0 2a2 2 0 0 0-2 2 2 2 0 0 0 2 2 2 2 0 0 0 2-2 2 2 0 0 0-2-2z" fill="#e0e0e0" /></svg>
<svg style="left:195px;top:204px;" width="16" height="16" viewBox="0 0 16 16" ><path d="m14.564 2-2.2441.32812.81836 1.9004 1.7148-.25-.28906-1.9785zm-4.2227.61523-1.9785.28906.81836 1.9004 1.9785-.28906-.81836-1.9004zm-3.957.57812-1.9785.28906.81836 1.9023 1.9785-.28906-.81836-1.9023zm-3.9551.57812-1.7148.25.28906 1.9785 2.2441-.32812-.81836-1.9004z" fill="#e0e0e0" /><path d="M1 7v6c0 .55226.44772 1 1 1h12c.55228 0 1-.44774 1-1v-6zM5 9h6l-3 4z" fill="#e0e0e0" fill-rule="evenodd"/></svg>
<svg style="left:18px;top:475px;" width="10" height="16" viewBox="0 0 10 16"><path d="M7.500 1.500 2.500 8 7.500 14.500" stroke="#e0e0e0" stroke-width="2" fill="none" stroke-linecap="round" stroke-linejoin="round"/></svg>
<svg style="left:38px;top:475px;" width="10" height="16" viewBox="0 0 10 16"><path d="M2.500 1.500 7.500 8 2.500 14.500" stroke="#6c707b" stroke-width="2" fill="none" stroke-linecap="round" stroke-linejoin="round"/></svg>
<div class="a" style="left:221px;top:475px;width:16px;height:7px;background:#e0e0e0;"></div><div class="a" style="left:221px;top:484px;width:16px;height:7px;background:#e0e0e0;"></div>
<svg style="left:220px;top:505px;" width="16" height="16" viewBox="0 0 16 16" ><circle cx="7.1" cy="5.9" r="4.2" fill="none" stroke="#e0e0e0" stroke-width="1.9"/><path d="M10.3 9.1 14 13" stroke="#e0e0e0" stroke-width="2" stroke-linecap="round"/></svg>
<svg style="left:266px;top:112px;" width="16" height="16" viewBox="0 0 16 16" ><path d="m8 2a6 6 0 0 0-6 6 6 6 0 0 0 6 6 6 6 0 0 0 6-6 6 6 0 0 0-6-6zm0 2a4 4 0 0 1 4 4 4 4 0 0 1-4 4 4 4 0 0 1-4-4 4 4 0 0 1 4-4z" fill="#a5efac" /></svg>
<svg style="left:381px;top:112px;" width="16" height="16" viewBox="0 0 16 16" ><path d="m8 2a6 6 0 0 0-6 6 6 6 0 0 0 6 6 6 6 0 0 0 6-6 6 6 0 0 0-6-6zm0 2a4 4 0 0 1 4 4 4 4 0 0 1-4 4 4 4 0 0 1-4-4 4 4 0 0 1 4-4z" fill="#fc9c9c" /></svg>
<svg style="left:470px;top:112px;" width="16" height="16" viewBox="0 0 16 16" ><path d="m8 2a6 6 0 0 0-6 6 6 6 0 0 0 6 6 6 6 0 0 0 6-6 6 6 0 0 0-6-6zm0 2a4 4 0 0 1 4 4 4 4 0 0 1-4 4 4 4 0 0 1-4-4 4 4 0 0 1 4-4z" fill="#fc9c9c" /></svg>
<svg style="left:543px;top:112px;" width="16" height="16" viewBox="0 0 16 16" ><path d="m8 2a6 6 0 0 0-6 6 6 6 0 0 0 6 6 6 6 0 0 0 6-6 6 6 0 0 0-6-6zm0 2a4 4 0 0 1 4 4 4 4 0 0 1-4 4 4 4 0 0 1-4-4 4 4 0 0 1 4-4z" fill="#fc9c9c" /></svg>
<svg style="left:611px;top:112px;" width="16" height="16" viewBox="0 0 16 16" ><path d="m8 2a6 6 0 0 0-6 6 6 6 0 0 0 6 6 6 6 0 0 0 6-6 6 6 0 0 0-6-6zm0 2a4 4 0 0 1 4 4 4 4 0 0 1-4 4 4 4 0 0 1-4-4 4 4 0 0 1 4-4z" fill="#a5efac" /></svg>
<svg style="left:442px;top:114px;" width="12" height="12" viewBox="0 0 12 12"><path d="M1.500 1.500 10.500 10.500M10.500 1.500 1.500 10.500" stroke="#f0f0f0" stroke-width="2" stroke-linecap="round"/></svg>
<svg style="left:754.5px;top:111.5px;" width="16" height="16" viewBox="0 0 16 16" ><path d="m7 1v6h-6v2h6v6h2v-6h6v-2h-6v-6z" fill="#8a8e99" /></svg>
<svg style="left:1072px;top:112px;" width="16" height="16" viewBox="0 0 16 16" ><path d="M1 1h5l-1.500 1.500 3 3-1.500 1.500-3-3L1 6zM15 1v5l-1.500-1.500-3 3-1.500-1.500 3-3L10 1zM1 15v-5l1.500 1.500 3-3 1.500 1.500-3 3L6 15zM15 15h-5l1.500-1.500-3-3 1.500-1.500 3 3L15 10z" fill="#e0e0e0" /></svg>
<svg style="left:264px;top:143px;" width="16" height="16" viewBox="0 0 16 16" ><path d="M2 2 6.200 14 7.800 10.400 10.300 13.400 12.400 11.900 9.300 8.300 13.400 7.100z" fill="#699ce8" /></svg>
<svg style="left:304px;top:143px;" width="16" height="16" viewBox="0 0 16 16" ><path d="M8 .8 10.800 3.800H5.200zM8 15.200 5.200 12.200h5.600zM.8 8 3.800 5.200v5.600zM15.200 8 12.200 10.800V5.200z" fill="#e0e0e0" /><circle cx="8" cy="8" r="2" fill="#e0e0e0"/></svg>
<svg style="left:336px;top:143px;" width="16" height="16" viewBox="0 0 16 16" ><path d="M3.300 12.500A6 6 0 1 1 12.700 12.500" stroke="#e0e0e0" stroke-width="2" fill="none"/><path d="M.8 10.500 6 10.500 3.400 15.200z" fill="#e0e0e0" /><circle cx="8" cy="8.500" r="2.200" fill="#e0e0e0"/></svg>
<svg style="left:368px;top:143px;" width="16" height="16" viewBox="0 0 16 16" ><path d="M9.200 1h5.800v5.800zM6.800 15h-5.800v-5.800z" fill="#e0e0e0" /><path d="M13 3 3 13" stroke="#e0e0e0" stroke-width="2"/><circle cx="8" cy="8" r="3.100" fill="#333b4f"/><circle cx="8" cy="8" r="1.900" fill="#e0e0e0"/></svg>
<svg style="left:408px;top:143px;" width="16" height="16" viewBox="0 0 16 16" ><path d="M1 1h11v5h-2v-3h-7v2h6v2h-6v2h4v2h-4v2h5v2h-7z" fill="#e0e0e0" /><path d="M8.600 7.400 15.600 10.400 13 11.500 15.200 14.600 13.700 15.700 11.500 12.600 9.600 14.800z" fill="#e0e0e0" stroke="#333b4f" stroke-width="1" paint-order="stroke"/></svg>
<svg style="left:440px;top:143px;" width="16" height="16" viewBox="0 0 16 16" ><path d="M3.500 7V5.500a4.500 4.500 0 0 1 9 0V7h1.500v7.700h-12V7zM5.500 7h5V5.500a2.500 2.500 0 0 0-5 0zM7 9.500v3h2v-3z" fill="#e0e0e0" fill-rule="evenodd"/></svg>
<svg style="left:480px;top:143px;" width="16" height="16" viewBox="0 0 16 16" ><path d="M8 1 15 4.500v7L8 15 1 11.500v-7zM8.600 2.700 6.300 3.900 8.600 5.200 10.900 3.900zM3 6.700v3.600l4 2v-3.700z" fill="#e0e0e0" fill-rule="evenodd" stroke="#e0e0e0" stroke-width=".6" stroke-linejoin="round"/></svg>
<svg style="left:513px;top:143px;" width="16" height="16" viewBox="0 0 16 16" ><path d="M1.700 2.900h2.200v2.200h-2.200zM7.900 2.900h2.200v2.200h-2.200zM1.700 9.100h2.200v2.200h-2.200z" fill="#e0e0e0" /><path d="M7 15v-3.800a3 3 0 0 1 6 0v3.800" stroke="#e0e0e0" stroke-width="2.200" fill="none"/></svg>
<svg style="left:273px;top:183px;" width="4" height="16" viewBox="0 0 4 16"><circle cx="2" cy="2" r="1.900" fill="#a9aaaf"/><circle cx="2" cy="8" r="1.900" fill="#a9aaaf"/><circle cx="2" cy="14" r="1.900" fill="#a9aaaf"/></svg>
<svg style="left:1113px;top:144px;" width="16" height="16" viewBox="0 0 16 16" ><path d="M2 1v14h6.500v-5h2v-2h3.500v-2.500h-5v-4.500z" fill="#e0e0e0" /><path d="M10 1v3.500h3.500z" fill="#e0e0e0" /><path d="m11 9v2h-2v2h2v2h2v-2h2v-2h-2v-2z" fill="#84ffb1" /></svg>
<svg style="left:1145px;top:144px;" width="16" height="16" viewBox="0 0 16 16" ><path d="M1 3.500a1.500 1.500 0 0 1 1.500-1.500h3.200l1.500 2h4.300a1.500 1.500 0 0 1 1.500 1.500v.7h-1.600v-.6h-4.900l-1.500-2h-2.400v9.400l1.900-6.800h10.500l-2.300 8c-.2.500-.5.800-1 .8h-9.200a1.500 1.500 0 0 1-1.500-1.500z" fill="#e0e0e0" /></svg>
<svg style="left:1177px;top:144px;" width="16" height="16" viewBox="0 0 16 16" ><path d="m3 1c-1.1046 0-2 .89543-2 2v10c0 1.1046.89543 2 2 2h10c1.1046 0 2-.89543 2-2v-8l-4-4zm1 0h3v4.500h-3zm4 8.300a1.700 1.700 0 0 1 0 3.400 1.700 1.700 0 0 1 0-3.400z" fill="#717582" fill-rule="evenodd"/><rect x="4" y="1" width="3" height="4.500" fill="#878b97"/></svg>
<svg style="left:1282px;top:144px;" width="10" height="16" viewBox="0 0 10 16"><path d="M7.700 1.300 2.300 8 7.700 14.700" stroke="#717583" stroke-width="1.700" fill="none" stroke-linecap="round" stroke-linejoin="round"/></svg>
<svg style="left:1306px;top:144px;" width="10" height="16" viewBox="0 0 10 16"><path d="M2.300 1.300 7.700 8 2.300 14.700" stroke="#717583" stroke-width="1.700" fill="none" stroke-linecap="round" stroke-linejoin="round"/></svg>
<svg style="left:1331px;top:144px;" width="16" height="16" viewBox="0 0 16 16" ><path d="M3.600 8.200A5.300 5.300 0 1 1 9.600 13.400" stroke="#e0e0e0" stroke-width="1.900" fill="none"/><path d="M.6 8 6.400 8 3.500 11.800z" fill="#e0e0e0" /><path d="M8.700 5v3.600h3" stroke="#e0e0e0" stroke-width="1.600" fill="none"/></svg>
<svg style="left:1113px;top:174px;" width="16" height="16" viewBox="0 0 16 16" ><path d="m8 2a6 6 0 0 0-6 6 6 6 0 0 0 6 6 6 6 0 0 0 6-6 6 6 0 0 0-6-6zm0 2a4 4 0 0 1 4 4 4 4 0 0 1-4 4 4 4 0 0 1-4-4 4 4 0 0 1 4-4z" fill="#fc9c9c" /></svg>
<svg style="left:1331px;top:174px;" width="16" height="16" viewBox="0 0 16 16" ><path d="M4.500 .8 5.700 2.500 5.100 3.400V9h2.100v4.200a1.800 1.800 0 0 1-1.800 1.800h-1.800a1.800 1.800 0 0 1-1.800-1.800V9h2.100V3.400l-.6-.9z" fill="#e0e0e0" /><path d="M8.200 1h2v3.200a1.100 1.100 0 0 0 2.200 0V1h2v3.300a3.200 3.200 0 0 1-2.100 3V15h-2V7.300a3.200 3.200 0 0 1-2.100-3z" fill="#e0e0e0" /></svg>
<svg style="left:1330px;top:204px;" width="16" height="16" viewBox="0 0 16 16" ><circle cx="7.1" cy="5.9" r="4.2" fill="none" stroke="#e0e0e0" stroke-width="1.9"/><path d="M10.3 9.1 14 13" stroke="#e0e0e0" stroke-width="2" stroke-linecap="round"/></svg>
<svg style="left:1198px;top:236px;" width="16" height="16" viewBox="0 0 16 16" ><path d="m8 2a6 6 0 0 0-6 6 6 6 0 0 0 6 6 6 6 0 0 0 6-6 6 6 0 0 0-6-6zm0 2a4 4 0 0 1 4 4 4 4 0 0 1-4 4 4 4 0 0 1-4-4 4 4 0 0 1 4-4z" fill="#fc9c9c" /></svg>
<svg style="left:1202px;top:324px;" width="16" height="16" viewBox="0 0 16 16" ><path d="m8 2a6 6 0 0 0-6 6 6 6 0 0 0 6 6 6 6 0 0 0 6-6 6 6 0 0 0-6-6zm0 2a4 4 0 0 1 4 4 4 4 0 0 1-4 4 4 4 0 0 1-4-4 4 4 0 0 1 4-4z" fill="#e0e0e0" /></svg>
<svg style="left:1337px;top:260.5px;" width="12" height="12" viewBox="0 0 12 12"><path d="M2.600 4.300 6 7.500 9.400 4.300" stroke="#9a9da7" stroke-width="2" fill="none" stroke-linecap="round" stroke-linejoin="round"/></svg>
<svg style="left:1337px;top:282.5px;" width="12" height="12" viewBox="0 0 12 12"><path d="M2.600 4.300 6 7.500 9.400 4.300" stroke="#9a9da7" stroke-width="2" fill="none" stroke-linecap="round" stroke-linejoin="round"/></svg>
<svg style="left:1337px;top:304.5px;" width="12" height="12" viewBox="0 0 12 12"><path d="M2.600 4.300 6 7.500 9.400 4.300" stroke="#9a9da7" stroke-width="2" fill="none" stroke-linecap="round" stroke-linejoin="round"/></svg>
<svg style="left:1337px;top:348.5px;" width="12" height="12" viewBox="0 0 12 12"><path d="M2.600 4.300 6 7.500 9.400 4.300" stroke="#9a9da7" stroke-width="2" fill="none" stroke-linecap="round" stroke-linejoin="round"/></svg>
<svg style="left:1337px;top:370.5px;" width="12" height="12" viewBox="0 0 12 12"><path d="M2.600 4.300 6 7.500 9.400 4.300" stroke="#9a9da7" stroke-width="2" fill="none" stroke-linecap="round" stroke-linejoin="round"/></svg>

</div>
</body>
</html>
